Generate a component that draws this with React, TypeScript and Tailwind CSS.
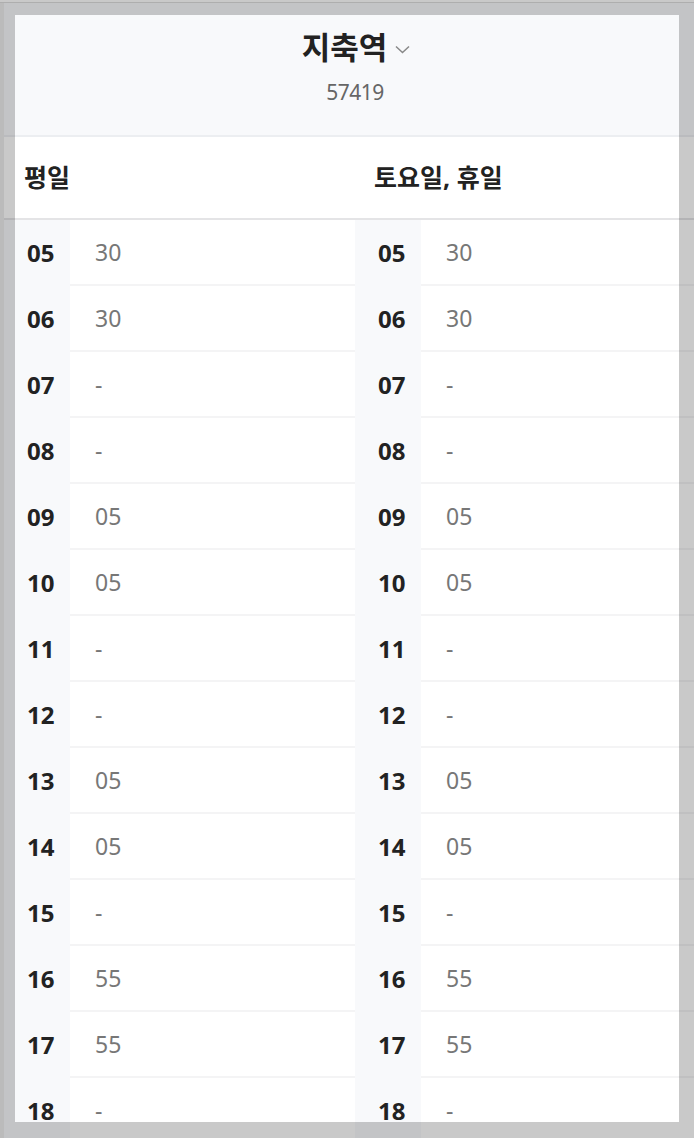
import React from 'react';

const rows: [string, string, string][] = [
  ['05', '30', '30'],
  ['06', '30', '30'],
  ['07', '-', '-'],
  ['08', '-', '-'],
  ['09', '05', '05'],
  ['10', '05', '05'],
  ['11', '-', '-'],
  ['12', '-', '-'],
  ['13', '05', '05'],
  ['14', '05', '05'],
  ['15', '-', '-'],
  ['16', '55', '55'],
  ['17', '55', '55'],
  ['18', '-', '-'],
  ['19', '-', '-'],
];

const font = { fontFamily: '"Noto Sans", "Noto Sans CJK KR", sans-serif' };

const Cell: React.FC<{ hour: string; min: string }> = ({ hour, min }) => (
  <div className="flex h-[66px]">
    <div className="w-[66px] shrink-0 bg-[#f8f9fb] flex items-center pl-[23px] text-[24px] font-bold text-[#222]">
      {hour}
    </div>
    <div className="flex-1 flex items-center pl-[25px] text-[23px] text-[#777] border-b-2 border-[#f4f4f5]">
      {min}
    </div>
  </div>
);

export default function App() {
  return (
    <div className="relative w-full h-[1138px] overflow-hidden bg-white" style={font}>
      <div className="h-[3px] border-b border-[#dddddd] bg-white" />
      <div className="flex">
        <div className="w-[4px] shrink-0 bg-[#eeeeee]" />
        <div className="w-[702px] shrink-0">
          <header className="h-[134px] bg-[#f8f9fb] border-b-2 border-[#eceef1] flex flex-col items-center pt-[24px]">
            <div className="flex items-center gap-[8px] pl-[2px]">
              <h1 className="text-[31px] font-bold text-[#222] leading-[40px]">지축역</h1>
              <svg width="15" height="9" viewBox="0 0 15 9" className="mt-[4px]">
                <path d="M1 1.5 L7.5 7.5 L14 1.5" fill="none" stroke="#888" strokeWidth="1.5" />
              </svg>
            </div>
            <div className="text-[21px] leading-[28px] text-[#666] mt-[11px] tracking-[-0.5px]">57419</div>
          </header>
          <div className="flex h-[83px] border-b-2 border-[#e4e4e6] items-center">
            <div className="w-[351px] pl-[20px] text-[25px] font-bold text-[#222]">평일</div>
            <div className="flex-1 pl-[19px] text-[25px] font-bold text-[#222]">토요일, 휴일</div>
          </div>
          <div className="flex">
            <div className="w-[351px]">
              {rows.map(([h, a]) => (
                <Cell key={h} hour={h} min={a} />
              ))}
            </div>
            <div className="flex-1">
              {rows.map(([h, , b]) => (
                <Cell key={h} hour={h} min={b} />
              ))}
            </div>
          </div>
        </div>
      </div>
      <div className="absolute left-[15px] top-[15px] w-[664px] h-[1107px] shadow-[0_0_0_2000px_rgba(0,0,0,0.21)] pointer-events-none" />
    </div>
  );
}
